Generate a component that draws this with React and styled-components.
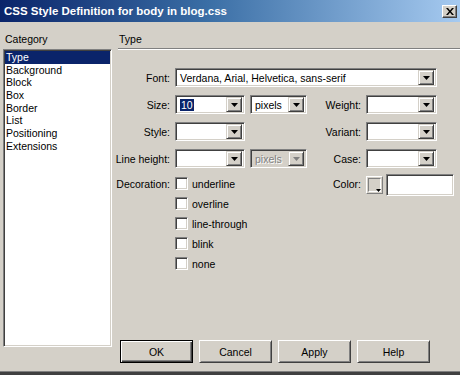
import React from 'react';
import styled, { createGlobalStyle } from 'styled-components';

const Global = createGlobalStyle`
  body {
    margin: 0;
    background: #d4d0c8;
    font-family: "Liberation Sans", Arial, sans-serif;
    font-size: 10.5px;
    color: #000;
  }
`;

const Window = styled.div`
  width: 460px;
  height: 375px;
  display: flex;
  flex-direction: column;
  background: #d4d0c8;
  overflow: hidden;
`;

const TitleBar = styled.div`
  height: 22px;
  flex: none;
  display: flex;
  align-items: center;
  justify-content: space-between;
  padding: 0 3px 0 4px;
  background: linear-gradient(to right, #0a246a 0%, #3a6ea5 45%, #a6caf0 100%);
`;

const Title = styled.div`
  color: #fff;
  font-weight: bold;
  font-size: 11.5px;
`;

const CloseButton = styled.div`
  box-sizing: border-box;
  width: 15px;
  height: 13px;
  display: flex;
  align-items: center;
  justify-content: center;
  background: #d4d0c8;
  border: 1px solid;
  border-color: #fff #404040 #404040 #fff;
  box-shadow: inset -1px -1px #808080;
`;

const Body = styled.div`
  flex: 1;
  display: flex;
  gap: 6px;
  padding: 11px 0 0 3px;
  min-height: 0;
`;

const Sidebar = styled.div`
  width: 109px;
  display: flex;
  flex-direction: column;
  padding-bottom: 24px;
`;

const Caption = styled.div`
  height: 13px;
  line-height: 13px;
  padding-left: ${p => p.$indent || 0}px;
`;

const ListBox = styled.div`
  flex: 1;
  margin-top: 3px;
  background: #fff;
  border: 1px solid;
  border-color: #808080 #fff #fff #808080;
  box-shadow: inset 1px 1px #404040, inset -1px -1px #d4d0c8;
  padding: 1px;
`;

const ListItem = styled.div`
  height: 12.7px;
  line-height: 12.7px;
  padding-left: 1px;
  background: ${p => (p.$selected ? '#0a246a' : 'transparent')};
  color: ${p => (p.$selected ? '#fff' : '#000')};
`;

const Main = styled.div`
  flex: 1;
  display: flex;
  flex-direction: column;
  padding-bottom: 8px;
`;

const Separator = styled.div`
  margin-top: 2px;
  height: 0;
  border-top: 1px solid #808080;
  border-bottom: 1px solid #fff;
`;

const FormGrid = styled.div`
  margin: 18px 0 0 -4px;
  display: grid;
  grid-template-columns: 56px 70px 57px 49px 71px;
  column-gap: 5px;
  row-gap: 8px;
  align-items: center;
`;

const Label = styled.div`
  text-align: right;
  white-space: nowrap;
  align-self: ${p => (p.$top ? 'start' : 'center')};
  margin-top: ${p => (p.$top ? 2 : 0)}px;
`;

const SelectBox = styled.div`
  box-sizing: border-box;
  height: 19px;
  grid-column: ${p => p.$span || 'auto'};
  display: flex;
  align-items: center;
  padding: 2px;
  background: ${p => (p.$disabled ? '#d4d0c8' : '#fff')};
  border: 1px solid;
  border-color: #808080 #fff #fff #808080;
  box-shadow: inset 1px 1px #404040, inset -1px -1px #d4d0c8;
`;

const SelectValue = styled.div`
  flex: 1;
  padding-left: 2px;
  white-space: nowrap;
  overflow: hidden;
  color: ${p => (p.$disabled ? '#808080' : '#000')};
  text-shadow: ${p => (p.$disabled ? '1px 1px #fff' : 'none')};
`;

const Highlight = styled.span`
  background: #0a246a;
  color: #fff;
  padding: 0 1px;
`;

const ArrowButton = styled.div`
  box-sizing: border-box;
  width: 16px;
  height: 15px;
  flex: none;
  display: flex;
  align-items: center;
  justify-content: center;
  background: #d4d0c8;
  border: 1px solid;
  border-color: #d4d0c8 #404040 #404040 #d4d0c8;
  box-shadow: inset 1px 1px #fff, inset -1px -1px #808080;
`;

const CheckList = styled.div`
  grid-column: 2 / 4;
  display: flex;
  flex-direction: column;
  gap: 7px;
  margin-top: 1px;
  align-self: start;
`;

const CheckRow = styled.label`
  display: flex;
  align-items: center;
  gap: 4px;
  height: 13px;
`;

const CheckBox = styled.span`
  box-sizing: border-box;
  width: 13px;
  height: 13px;
  flex: none;
  background: #fff;
  border: 1px solid;
  border-color: #808080 #fff #fff #808080;
  box-shadow: inset 1px 1px #404040, inset -1px -1px #d4d0c8;
`;

const ColorField = styled.div`
  display: flex;
  align-items: center;
  gap: 3px;
  align-self: start;
  margin-top: -2px;
  width: 88px;
`;

const Swatch = styled.div`
  position: relative;
  box-sizing: border-box;
  width: 17px;
  height: 18px;
  flex: none;
  background: #d4d0c8;
  border: 1px solid;
  border-color: #fff #808080 #808080 #fff;
  padding: 1px;
`;

const SwatchInner = styled.div`
  box-sizing: border-box;
  width: 100%;
  height: 100%;
  border: 1px solid;
  border-color: #808080 #fff #fff #808080;
`;

const SwatchArrow = styled.svg`
  position: absolute;
  right: 1px;
  bottom: 1px;
`;

const TextInput = styled.div`
  box-sizing: border-box;
  width: 68px;
  height: 22px;
  flex: none;
  background: #fff;
  border: 1px solid;
  border-color: #808080 #fff #fff #808080;
  box-shadow: inset 1px 1px #404040, inset -1px -1px #d4d0c8;
`;

const ButtonRow = styled.div`
  margin-top: auto;
  display: flex;
  gap: 6px;
  padding-left: 2px;
`;

const Button = styled.div`
  box-sizing: border-box;
  width: 73px;
  height: 23px;
  display: flex;
  align-items: center;
  justify-content: center;
  background: #d4d0c8;
  border: 1px solid;
  border-color: ${p => (p.$default ? '#000' : '#fff #404040 #404040 #fff')};
  box-shadow: ${p =>
    p.$default
      ? 'inset 1px 1px #fff, inset -1px -1px #404040, inset -2px -2px #808080'
      : 'inset 1px 1px #d4d0c8, inset -1px -1px #808080'};
`;

const BottomFrame = styled.div`
  height: 3px;
  flex: none;
  border-top: 1px solid #808080;
  background: #404040;
`;

function Arrow({ disabled }) {
  return (
    <svg width="7" height="4" viewBox="0 0 7 4">
      <polygon points="0,0 7,0 3.5,4" fill={disabled ? '#808080' : '#000'} />
    </svg>
  );
}

function Select({ value, span, disabled, selected }) {
  return (
    <SelectBox $span={span} $disabled={disabled}>
      <SelectValue $disabled={disabled}>
        {selected ? <Highlight>{value}</Highlight> : value}
      </SelectValue>
      <ArrowButton>
        <Arrow disabled={disabled} />
      </ArrowButton>
    </SelectBox>
  );
}

const categories = ['Type', 'Background', 'Block', 'Box', 'Border', 'List', 'Positioning', 'Extensions'];
const decorations = ['underline', 'overline', 'line-through', 'blink', 'none'];

export default function App() {
  return (
    <Window>
      <Global />
      <TitleBar>
        <Title>CSS Style Definition for body in blog.css</Title>
        <CloseButton>
          <svg width="8" height="7" viewBox="0 0 8 7">
            <path d="M0 0h2l2 2.5L6 0h2L5 3.5 8 7H6L4 4.5 2 7H0l3-3.5z" fill="#000" />
          </svg>
        </CloseButton>
      </TitleBar>
      <Body>
        <Sidebar>
          <Caption $indent={2}>Category</Caption>
          <ListBox>
            {categories.map((c, i) => (
              <ListItem key={c} $selected={i === 0}>{c}</ListItem>
            ))}
          </ListBox>
        </Sidebar>
        <Main>
          <Caption $indent={1}>Type</Caption>
          <Separator />
          <FormGrid>
            <Label>Font:</Label>
            <Select span="2 / 6" value="Verdana, Arial, Helvetica, sans-serif" />

            <Label>Size:</Label>
            <Select value="10" selected />
            <Select value="pixels" />
            <Label>Weight:</Label>
            <Select value="" />

            <Label>Style:</Label>
            <Select value="" />
            <div />
            <Label>Variant:</Label>
            <Select value="" />

            <Label>Line height:</Label>
            <Select value="" />
            <Select value="pixels" disabled />
            <Label>Case:</Label>
            <Select value="" />

            <Label $top>Decoration:</Label>
            <CheckList>
              {decorations.map(d => (
                <CheckRow key={d}>
                  <CheckBox />
                  {d}
                </CheckRow>
              ))}
            </CheckList>
            <Label $top>Color:</Label>
            <ColorField>
              <Swatch>
                <SwatchInner />
                <SwatchArrow width="5" height="3" viewBox="0 0 5 3">
                  <polygon points="0,0 5,0 2.5,3" fill="#000" />
                </SwatchArrow>
              </Swatch>
              <TextInput />
            </ColorField>
          </FormGrid>
          <ButtonRow>
            <Button $default>OK</Button>
            <Button>Cancel</Button>
            <Button>Apply</Button>
            <Button>Help</Button>
          </ButtonRow>
        </Main>
      </Body>
      <BottomFrame />
    </Window>
  );
}
